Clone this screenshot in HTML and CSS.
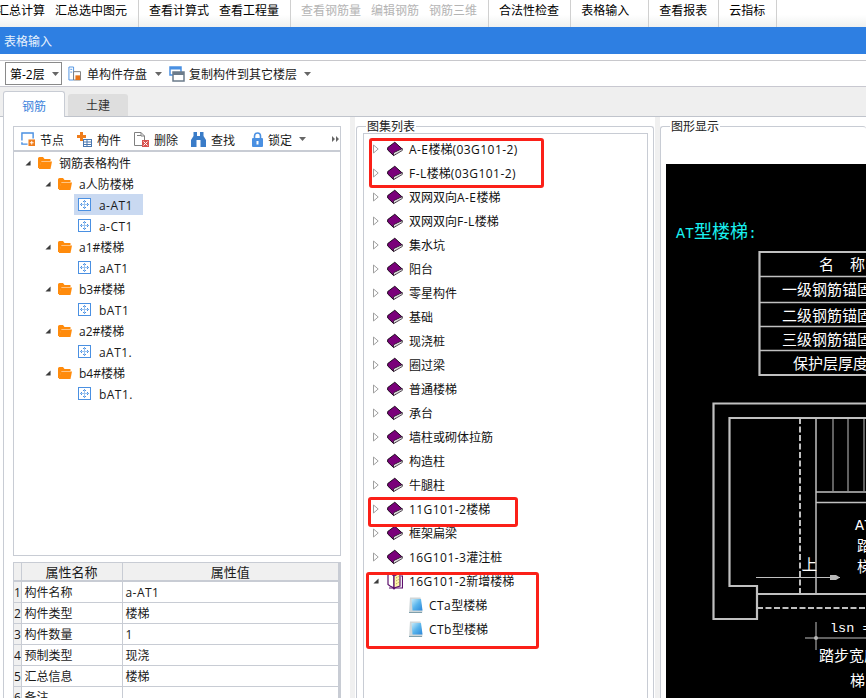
FILE: index.html
```html
<!DOCTYPE html>
<html lang="zh">
<head>
<meta charset="utf-8">
<title>表格输入</title>
<link rel="stylesheet" href="styles.css">
</head>
<body>
<svg class="defs" xmlns="http://www.w3.org/2000/svg">
  <defs>
    <linearGradient id="docfill" x1="0" y1="0" x2="1" y2="1">
      <stop offset="0" stop-color="#c8ecfa"/>
      <stop offset=".5" stop-color="#58b4ec"/>
      <stop offset="1" stop-color="#2c86d8"/>
    </linearGradient>
  </defs>
  <symbol id="book" viewBox="0 0 17 16">
    <path d="M.7 6.500 8.300 .8 16.200 8 6.800 14.800 .7 9Z" fill="#7a007a" stroke="#140414"/>
    <path d="M7 12 16.200 7.600V9.600L7 15Z" fill="#fff" stroke="#140414" stroke-width=".8"/>
    <path d="M8 13.300 15.500 9.200" stroke="#a8a8a8" stroke-width=".6"/>
  </symbol>
  <symbol id="openbook" viewBox="0 0 16 18">
    <path d="M1 3 3 1 7 4V16L3 14 1 12.500Z" fill="#fff" stroke="#5c0f6c" stroke-width="1.200"/>
    <path d="M7 4 13 1V14L7 16Z" fill="#fdf6a8" stroke="#5c0f6c" stroke-width="1.200"/>
    <path d="M14 4H15.500V16H8L7 17 6 16H2" fill="none" stroke="#5c0f6c" stroke-width="1.200"/>
    <path d="M9 6 11.500 4.500M9 9 11.500 7.500M9 12 11.500 10.500" stroke="#a9a04a" stroke-dasharray="1 1"/>
  </symbol>
  <symbol id="doc" viewBox="0 0 14 16">
    <path d="M1 .5H11.500L13.500 15.500H0Z" fill="#cfd6d8"/>
    <path d="M2.500 2H12L13.500 13.500H3.500Z" fill="url(#docfill)"/>
    <path d="M0 15.500H13" stroke="#7f9fab"/>
  </symbol>
  <symbol id="folder" viewBox="0 0 14 12">
    <path d="M0 1.500Q0 0 1.500 0H5L6.500 2H12.500V4H3.500L1.500 11H0Z" fill="#ff8b0c"/>
    <path d="M3 4.500H14L12.500 12H.8Z" fill="#ff8b0c"/>
  </symbol>
  <symbol id="leaf" viewBox="0 0 13 13">
    <rect x=".5" y=".5" width="12" height="12" fill="#fff" stroke="#4a90e2"/>
    <path d="M6.500 2.500V10.500M2.500 6.500H10.500" stroke="#9cc4f0"/>
    <path d="M5 4 6.500 2.500 8 4M5 9 6.500 10.500 8 9M4 5 2.500 6.500 4 8M9 5 10.500 6.500 9 8" fill="none" stroke="#4a90e2"/>
  </symbol>
  <symbol id="open-arrow" viewBox="0 0 6 10"><path d="M.5 1 5.200 5 .5 9Z" fill="#fff" stroke="#a0a0a0"/></symbol>
  <symbol id="down-arrow" viewBox="0 0 7 7"><path d="M6.500 .5V6.500H.5Z" fill="#3c3c3c"/></symbol>
  <symbol id="caret" viewBox="0 0 7 4"><path d="M0 0H7L3.500 4Z" fill="#666"/></symbol>
</svg>

<nav class="menu">
  <div class="menu-group first"><span>汇总计算</span><span>汇总选中图元</span></div>
  <div class="menu-group"><span>查看计算式</span><span>查看工程量</span></div>
  <div class="menu-group off"><span>查看钢筋量</span><span>编辑钢筋</span><span>钢筋三维</span></div>
  <div class="menu-group"><span>合法性检查</span></div>
  <div class="menu-group wide"><span>表格输入</span></div>
  <div class="menu-group"><span>查看报表</span></div>
  <div class="menu-group"><span>云指标</span></div>
</nav>

<header class="titlebar">表格输入</header>

<div class="floorbar">
  <div class="select"><span>第-2层</span><svg class="caret"><use href="#caret"/></svg></div>
  <div class="floor-btn save">
    <svg class="i13" viewBox="0 0 14 16"><path d="M1 1H6V15H1Z" fill="#fff" stroke="#4a90e2"/><path d="M2.500 3.500H4.500M2.500 6.500H4.500" stroke="#4a90e2"/><path d="M6 6H13.500V15H6Z" fill="#fff" stroke="#777"/><rect x="8" y="10" width="5" height="5" fill="#e8751a"/></svg>
    <span>单构件存盘</span><svg class="caret"><use href="#caret"/></svg>
  </div>
  <div class="floor-btn copy">
    <svg class="i16" viewBox="0 0 16 16"><rect x="1" y="1" width="11" height="8" fill="#fff" stroke="#4a90e2" stroke-width="1.500"/><rect x="1" y="1" width="11" height="2.500" fill="#4a90e2"/><rect x="4" y="6" width="11" height="9" fill="#fff" stroke="#6b7b8a" stroke-width="1.500"/><rect x="4" y="6" width="11" height="3" fill="#6b7b8a"/></svg>
    <span>复制构件到其它楼层</span><svg class="caret"><use href="#caret"/></svg>
  </div>
</div>

<div class="tabs">
  <div class="tab active">钢筋</div>
  <div class="tab">土建</div>
</div>

<main class="main">
  <section class="left">
    <div class="panel">
      <div class="tools">
        <div class="tool t1"><svg class="i14s" viewBox="0 0 15 15"><path d="M1 9V1H13V7M1 11V13H7" fill="none" stroke="#4a90e2" stroke-width="1.500"/><rect x="8" y="8" width="7" height="7" fill="#ef7d1c"/><path d="M11.500 9.500V13.500M9.500 11.500H13.500" stroke="#fff"/></svg><span>节点</span></div>
        <div class="tool t2"><svg class="i15" viewBox="0 0 15 15"><path d="M3 0H6V3H9V6H6V9H3V6H0V3H3Z" fill="#ef7d1c"/><rect x="6.500" y="7.500" width="8" height="7" fill="#fff" stroke="#4a78b0"/><path d="M7 10H14M7 12.500H14M10 8V14" stroke="#4a78b0"/></svg><span>构件</span></div>
        <div class="tool t3"><svg class="i15" viewBox="0 0 15 15"><path d="M.5 .5H7L10.500 4V13.500H.5Z" fill="#fff" stroke="#808080"/><path d="M3 3.500H7M7 .5V4H10.500" fill="none" stroke="#808080"/><rect x="8" y="8" width="7" height="7" fill="#d9534f"/><path d="M9.500 9.500 13.500 13.500M13.500 9.500 9.500 13.500" stroke="#fff"/></svg><span>删除</span></div>
        <div class="tool t4"><svg class="i15" viewBox="0 0 15 15"><path d="M2.500 0H6V4H9V0H12.500V4L15 8V15H9.500V8H5.500V15H0V8L2.500 4Z" fill="#3a7cc8"/></svg><span>查找</span></div>
        <div class="tool t5"><svg class="i13t" viewBox="0 0 13 15"><path d="M3.500 7V4Q3.500 1 6.500 1T9.500 4V7" fill="none" stroke="#4a90e2" stroke-width="1.600"/><rect x="1" y="6" width="11" height="9" rx="1" fill="#4a90e2"/><rect x="5.500" y="9" width="2" height="3.500" fill="#fff"/></svg><span>锁定</span><svg class="caret"><use href="#caret"/></svg></div>
        <svg class="more" viewBox="0 0 7 6"><path d="M0 0 3 3 0 6ZM4 0 7 3 4 6Z" fill="#666"/></svg>
      </div>
      <div class="tree">
        <div class="node l0"><svg class="tw"><use href="#down-arrow"/></svg><svg class="fd"><use href="#folder"/></svg><span>钢筋表格构件</span></div>
        <div class="node l1"><svg class="tw"><use href="#down-arrow"/></svg><svg class="fd"><use href="#folder"/></svg><span>a人防楼梯</span></div>
        <div class="node l2 sel"><svg class="lf"><use href="#leaf"/></svg><span class="lat">a-AT1</span></div>
        <div class="node l2"><svg class="lf"><use href="#leaf"/></svg><span class="lat">a-CT1</span></div>
        <div class="node l1"><svg class="tw"><use href="#down-arrow"/></svg><svg class="fd"><use href="#folder"/></svg><span>a1#楼梯</span></div>
        <div class="node l2"><svg class="lf"><use href="#leaf"/></svg><span class="lat">aAT1</span></div>
        <div class="node l1"><svg class="tw"><use href="#down-arrow"/></svg><svg class="fd"><use href="#folder"/></svg><span>b3#楼梯</span></div>
        <div class="node l2"><svg class="lf"><use href="#leaf"/></svg><span class="lat">bAT1</span></div>
        <div class="node l1"><svg class="tw"><use href="#down-arrow"/></svg><svg class="fd"><use href="#folder"/></svg><span>a2#楼梯</span></div>
        <div class="node l2"><svg class="lf"><use href="#leaf"/></svg><span class="lat">aAT1.</span></div>
        <div class="node l1"><svg class="tw"><use href="#down-arrow"/></svg><svg class="fd"><use href="#folder"/></svg><span>b4#楼梯</span></div>
        <div class="node l2"><svg class="lf"><use href="#leaf"/></svg><span class="lat">bAT1.</span></div>
      </div>
    </div>
    <div class="props">
      <table>
        <colgroup><col class="c0"><col class="c1"><col class="c2"></colgroup>
        <thead><tr><th></th><th>属性名称</th><th>属性值</th></tr></thead>
        <tbody>
          <tr><td class="n">1</td><td>构件名称</td><td class="lat">a-AT1</td></tr>
          <tr><td class="n">2</td><td>构件类型</td><td>楼梯</td></tr>
          <tr><td class="n">3</td><td>构件数量</td><td>1</td></tr>
          <tr><td class="n">4</td><td>预制类型</td><td>现浇</td></tr>
          <tr><td class="n">5</td><td>汇总信息</td><td>楼梯</td></tr>
          <tr><td class="n">6</td><td>备注</td><td></td></tr>
        </tbody>
      </table>
    </div>
  </section>

  <div class="splitter"></div>

  <section class="group mid">
    <div class="legend">图集列表</div>
    <div class="list">
      <div class="item"><svg class="ar"><use href="#open-arrow"/></svg><svg class="bk"><use href="#book"/></svg><span><i class="lat">A-E</i>楼梯<i class="lat">(03G101-2)</i></span></div>
      <div class="item"><svg class="ar"><use href="#open-arrow"/></svg><svg class="bk"><use href="#book"/></svg><span><i class="lat">F-L</i>楼梯<i class="lat">(03G101-2)</i></span></div>
      <div class="item"><svg class="ar"><use href="#open-arrow"/></svg><svg class="bk"><use href="#book"/></svg><span>双网双向<i class="lat">A-E</i>楼梯</span></div>
      <div class="item"><svg class="ar"><use href="#open-arrow"/></svg><svg class="bk"><use href="#book"/></svg><span>双网双向<i class="lat">F-L</i>楼梯</span></div>
      <div class="item"><svg class="ar"><use href="#open-arrow"/></svg><svg class="bk"><use href="#book"/></svg><span>集水坑</span></div>
      <div class="item"><svg class="ar"><use href="#open-arrow"/></svg><svg class="bk"><use href="#book"/></svg><span>阳台</span></div>
      <div class="item"><svg class="ar"><use href="#open-arrow"/></svg><svg class="bk"><use href="#book"/></svg><span>零星构件</span></div>
      <div class="item"><svg class="ar"><use href="#open-arrow"/></svg><svg class="bk"><use href="#book"/></svg><span>基础</span></div>
      <div class="item"><svg class="ar"><use href="#open-arrow"/></svg><svg class="bk"><use href="#book"/></svg><span>现浇桩</span></div>
      <div class="item"><svg class="ar"><use href="#open-arrow"/></svg><svg class="bk"><use href="#book"/></svg><span>圈过梁</span></div>
      <div class="item"><svg class="ar"><use href="#open-arrow"/></svg><svg class="bk"><use href="#book"/></svg><span>普通楼梯</span></div>
      <div class="item"><svg class="ar"><use href="#open-arrow"/></svg><svg class="bk"><use href="#book"/></svg><span>承台</span></div>
      <div class="item"><svg class="ar"><use href="#open-arrow"/></svg><svg class="bk"><use href="#book"/></svg><span>墙柱或砌体拉筋</span></div>
      <div class="item"><svg class="ar"><use href="#open-arrow"/></svg><svg class="bk"><use href="#book"/></svg><span>构造柱</span></div>
      <div class="item"><svg class="ar"><use href="#open-arrow"/></svg><svg class="bk"><use href="#book"/></svg><span>牛腿柱</span></div>
      <div class="item"><svg class="ar"><use href="#open-arrow"/></svg><svg class="bk"><use href="#book"/></svg><span><i class="lat">11G101-2</i>楼梯</span></div>
      <div class="item"><svg class="ar"><use href="#open-arrow"/></svg><svg class="bk"><use href="#book"/></svg><span>框架扁梁</span></div>
      <div class="item"><svg class="ar"><use href="#open-arrow"/></svg><svg class="bk"><use href="#book"/></svg><span><i class="lat">16G101-3</i>灌注桩</span></div>
      <div class="item"><svg class="ar down"><use href="#down-arrow"/></svg><svg class="bk tall"><use href="#openbook"/></svg><span><i class="lat">16G101-2</i>新增楼梯</span></div>
      <div class="item sub"><svg class="dc"><use href="#doc"/></svg><span><i class="lat">CTa</i>型楼梯</span></div>
      <div class="item sub"><svg class="dc"><use href="#doc"/></svg><span><i class="lat">CTb</i>型楼梯</span></div>
      <div class="mark m1"></div>
      <div class="mark m2"></div>
      <div class="mark m3"></div>
    </div>
  </section>

  <div class="splitter"></div>

  <section class="group right">
    <div class="legend">图形显示</div>
    <div class="cad">
      <svg class="drawing" viewBox="666 164 200 534" xmlns="http://www.w3.org/2000/svg">
        <text class="cyan" x="676" y="238"><tspan class="mono">AT</tspan>型楼梯<tspan class="mono">:</tspan></text>

        <g class="thick">
          <path d="M866 252H759.500V375H866"/>
          <path d="M866 403.500H713.500V619H757V586H729.500V418H866"/>
          <path d="M757 594H866"/>
        </g>
        <g class="mid-line">
          <path d="M760 276.500H866M760 302.500H866M760 326.500H866M760 350.500H866"/>
          <path d="M816 418V594M816 492H866M816 502.500H866"/>
        </g>
        <g class="dash">
          <path d="M800 418V594"/>
          <path d="M757 608H866"/>
        </g>
        <g class="thin">
          <path d="M833 418V491M848 418V491M864 418V491"/>
          <path d="M756 577.500H840"/>
          <path d="M816 622V650M805 638H866"/>
          <path d="M802 570H816"/>
        </g>
        <path class="fillg" d="M830 575H836L840 577.500 836 580H830Z"/>
        <circle class="fillg" cx="816" cy="638" r="2"/>

        <g class="cadtext">
          <text x="819" y="270">名</text>
          <text x="850" y="270">称</text>
          <text x="782" y="295">一级钢筋锚固</text>
          <text x="782" y="321">二级钢筋锚固</text>
          <text x="782" y="345">三级钢筋锚固</text>
          <text x="793" y="369">保护层厚度</text>
          <text x="802" y="570">上</text>
          <text class="mono" x="855" y="530">AT</text>
          <text x="857" y="551">踏</text>
          <text x="857" y="572">梯</text>
          <text class="lsn" x="830" y="632">lsn =</text>
          <text x="819" y="661">踏步宽度</text>
          <text x="850" y="686">梯</text>
        </g>
      </svg>
    </div>
  </section>
</main>
</body>
</html>
```

FILE: styles.css
```css
* { box-sizing: border-box; }

html, body {
  margin: 0;
  width: 866px;
  height: 698px;
  overflow: hidden;
  background: #fff;
  font: 12px/16px "Open Sans", "Noto Sans CJK SC", "Liberation Sans", sans-serif;
  color: #1a1a1a;
}

.defs { width: 0; height: 0; overflow: hidden; }

svg { display: block; flex: none; }

.lat { font-style: normal; letter-spacing: .45px; }

/* top menu */
.menu {
  display: flex;
  height: 27px;
  width: 866px;
  background: linear-gradient(#fff, #fff 55%, #eff1f0);
  overflow: hidden;
}
.menu-group {
  display: flex;
  flex: none;
  align-items: flex-start;
  gap: 10px;
  padding: 3px 11px 0 10px;
  height: 27px;
  border-right: 1px solid #d0d0d0;
  color: #000;
  white-space: nowrap;
}
.menu-group.first { margin-left: -13px; }
.menu-group.off { color: #b4b4b4; }
.menu-group.wide { padding-right: 19px; }

.titlebar {
  height: 27px;
  padding: 7px 4px 0;
  background: #2e7fe2;
  color: #e8f2fd;
}

/* floor bar */
.floorbar {
  display: flex;
  align-items: center;
  height: 27px;
  margin-top: 6px;
  padding-left: 5px;
  background: #fff;
  border-top: 1px solid #c8c8cc;
  border-bottom: 1px solid #c8c8d0;
}
.floorbar span { padding-top: 2px; }
.select {
  display: flex;
  align-items: center;
  width: 57px;
  height: 23px;
  padding-left: 4px;
  border: 1px solid #8a8a8a;
  color: #000;
}
.select .caret { margin-left: 7px; }
.caret { width: 7px; height: 4px; }
.floor-btn { display: flex; align-items: center; }
.floor-btn.save { margin-left: 6px; width: 100px; }
.floor-btn.save span { margin: 0 8px 0 6px; }
.floor-btn.copy { margin-left: 1px; }
.floor-btn.copy span { margin: 0 7px 0 4px; }
.i13 { width: 13px; height: 15px; }
.i13t { width: 13px; height: 15px; }
.i14s { width: 14px; height: 14px; }
.i15 { width: 15px; height: 15px; }
.i16 { width: 16px; height: 16px; }

/* tabs */
.tabs {
  display: flex;
  align-items: flex-end;
  height: 30px;
  padding-left: 3px;
  gap: 3px;
  background: #efefef;
  border-bottom: 1px solid #c0c4cc;
}
.tab {
  width: 60px;
  height: 22px;
  padding-top: 4px;
  text-align: center;
  background: #dedede;
  border-radius: 3px 3px 0 0;
  color: #333;
}
.tab.active {
  width: 62px;
  height: 26px;
  margin-bottom: -1px;
  padding-top: 7px;
  background: #fff;
  border: 1px solid #c8ccd4;
  border-bottom: 0;
  color: #3d83dc;
}

/* main */
.main {
  display: flex;
  height: 581px;
  margin-left: 3px;
  border-left: 1px solid #c8ccd4;
  overflow: hidden;
}
.left {
  flex: none;
  width: 346px;
  padding: 9px 9px 0;
}
.panel {
  height: 430px;
  border: 1px solid #c8ccd4;
  display: flex;
  flex-direction: column;
}
.tools {
  display: flex;
  flex: none;
  height: 25px;
  padding-top: 1px;
  align-items: center;
  border-bottom: 2px solid #c8ccd4;
}
.tool { display: flex; align-items: center; gap: 5px; flex: none; }
.tool span { padding-top: 4px; }
.tool.t1 { margin-left: 7px; }
.tool.t2 { margin-left: 13px; }
.tool.t3 { margin-left: 13px; }
.tool.t4 { margin-left: 13px; }
.tool.t5 { margin-left: 16px; gap: 4px; }
.tool.t5 .caret { margin-left: 3px; }
.more { width: 7px; height: 6px; margin-left: 26px; }

.tree { flex: 1; }
.node { display: flex; align-items: center; height: 21px; white-space: nowrap; }
.node span { padding-top: 2px; }
.node .tw { width: 6px; height: 6px; margin-right: 7px; }
.node .fd { width: 14px; height: 12px; margin-right: 7px; }
.node .lf { width: 13px; height: 13px; margin-right: 8px; }
.l0 { padding-left: 11px; }
.l1 { padding-left: 31px; }
.l2 { padding-left: 64px; }
.node.sel { position: relative; z-index: 0; }
.node.sel::before {
  content: "";
  position: absolute;
  z-index: -1;
  left: 60px;
  top: 0;
  width: 69px;
  height: 21px;
  background: #c9d9f1;
}

/* property table */
.props {
  height: 140px;
  margin-top: 6px;
  border-left: 1px solid #c8ccd4;
  border-right: 2px solid #c8ccd4;
  border-top: 1px solid #c8ccd4;
  overflow: hidden;
}
.props table {
  width: 100%;
  border-collapse: collapse;
  table-layout: fixed;
}
.c0 { width: 7px; }
.c1 { width: 101px; }
.props th, .props td {
  padding: 2px 0 0 3px;
  height: 21px;
  border-right: 1px solid #c8ccd4;
  border-bottom: 1px solid #c8ccd4;
  font-weight: 400;
  white-space: nowrap;
  overflow: hidden;
}
.props th {
  height: 18px;
  padding: 1px 0 0;
  font-size: 13px;
  background: #f0f0f0;
  border-bottom: 2px solid #c8ccd4;
  text-align: center;
}
.props td.n { padding: 2px 0 0; background: #f0f0f0; font-size: 12px; text-align: center; }

.splitter { flex: none; width: 5px; background: #f0f0f0; }

/* groups */
.group {
  position: relative;
  flex: none;
  margin-top: 9px;
  border: 1px solid #c8ccd4;
  border-bottom: 0;
  border-radius: 3px 3px 0 0;
}
.legend {
  position: absolute;
  top: -8px;
  left: 9px;
  padding: 0 1px;
  background: #fff;
  color: #222;
}
.mid { width: 298px; margin-left: 1px; margin-right: 1px; padding: 6px 5px 0 6px; }
.right { flex: 1; border-right: 0; padding: 37px 0 0 5px; }

.list {
  position: relative;
  height: 100%;
  padding-top: 3px;
  border: 1px solid #c8ccd4;
  border-bottom: 0;
}
.item { display: flex; align-items: center; height: 24px; white-space: nowrap; color: #111; }
.item span { padding-top: 2px; }
.item .ar { width: 6px; height: 10px; margin: 0 8px 0 9px; }
.item .ar.down { width: 6px; height: 6px; }
.item .bk { width: 16px; height: 16px; margin-right: 6px; }
.item .bk.tall { height: 18px; }
.item.sub { padding-left: 45px; }
.item .dc { width: 14px; height: 16px; margin-right: 6px; }

.mark {
  position: absolute;
  border: 3px solid #fb2018;
  border-radius: 3px;
}
.m1 { left: 5px; top: 4px; width: 175px; height: 50px; }
.m2 { left: 4px; top: 363px; width: 150px; height: 30px; }
.m3 { left: 2px; top: 438px; width: 173px; height: 77px; }

/* drawing */
.cad { height: 534px; background: #000; overflow: hidden; }
.drawing { width: 200px; height: 534px; }
.drawing path { fill: none; }
.thick path { stroke: #c0c0c0; stroke-width: 2.2; }
.mid-line path { stroke: #c0c0c0; stroke-width: 1.5; }
.dash path { stroke: #c0c0c0; stroke-width: 2; stroke-dasharray: 6 2.5; }
.thin path { stroke: #c0c0c0; stroke-width: 1; }
.drawing .fillg { fill: #b8b8b8; }
.drawing text { font-family: "Noto Sans CJK SC", sans-serif; }
.drawing .cyan { fill: #19f0f0; font-size: 18px; }
.drawing .mono, .cyan .mono { font-family: "Liberation Mono", monospace; font-size: 15px; }
.drawing .lsn { font-family: "Liberation Mono", monospace; font-size: 13.5px; }
.cadtext text { fill: #fff; font-size: 15px; }
```
